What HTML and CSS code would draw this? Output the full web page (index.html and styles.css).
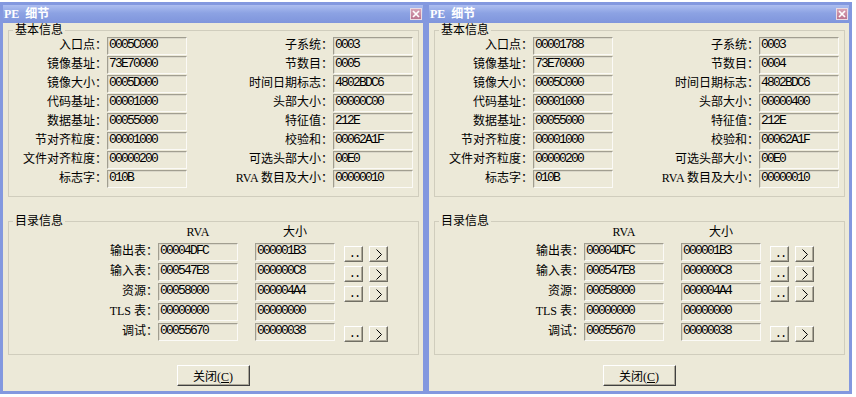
FILE: index.html
```html
<!DOCTYPE html>
<html lang="zh-CN">
<head>
    <meta charset="UTF-8">
    <title>PE 细节</title>
    <link rel="stylesheet" href="styles.css">
</head>
<body>

<!-- 第一个窗口 -->
<div class="window">
    <div class="titlebar">
        <span class="title">PE 细节</span>
        <button class="close-x"><svg width="8" height="8" viewBox="0 0 8 8"><path d="M1 1L7 7M7 1L1 7" stroke="#fff" stroke-width="1.7"/></svg></button>
    </div>
    <div class="client">
        <fieldset class="group">
            <legend>基本信息</legend>
            <div class="basic">
                <span class="lbl">入口点：</span><span class="field">0005C000</span>
                <span class="lbl">子系统：</span><span class="field">0003</span>
                <span class="lbl">镜像基址：</span><span class="field">73E70000</span>
                <span class="lbl">节数目：</span><span class="field">0005</span>
                <span class="lbl">镜像大小：</span><span class="field">0005D000</span>
                <span class="lbl">时间日期标志：</span><span class="field">4802BDC6</span>
                <span class="lbl">代码基址：</span><span class="field">00001000</span>
                <span class="lbl">头部大小：</span><span class="field">00000C00</span>
                <span class="lbl">数据基址：</span><span class="field">00055000</span>
                <span class="lbl">特征值：</span><span class="field">212E</span>
                <span class="lbl">节对齐粒度：</span><span class="field">00001000</span>
                <span class="lbl">校验和：</span><span class="field">00062A1F</span>
                <span class="lbl">文件对齐粒度：</span><span class="field">00000200</span>
                <span class="lbl">可选头部大小：</span><span class="field">00E0</span>
                <span class="lbl">标志字：</span><span class="field">010B</span>
                <span class="lbl">RVA 数目及大小：</span><span class="field">00000010</span>
            </div>
        </fieldset>

        <fieldset class="group dirs">
            <legend>目录信息</legend>
            <div class="dir-head"><span>RVA</span><span>大小</span></div>
            <div class="dir-row">
                <span class="lbl">输出表：</span><span class="field">00004DFC</span><span class="field size">000001B3</span>
                <button class="mini dots">..</button>
                <button class="mini"><svg width="8" height="11" viewBox="0 0 8 11"><path d="M1.5 0.5L6.5 5.5L1.5 10.5" fill="none" stroke="#000"/></svg></button>
            </div>
            <div class="dir-row">
                <span class="lbl">输入表：</span><span class="field">000547E8</span><span class="field size">000000C8</span>
                <button class="mini dots">..</button>
                <button class="mini"><svg width="8" height="11" viewBox="0 0 8 11"><path d="M1.5 0.5L6.5 5.5L1.5 10.5" fill="none" stroke="#000"/></svg></button>
            </div>
            <div class="dir-row">
                <span class="lbl">资源：</span><span class="field">00058000</span><span class="field size">000004A4</span>
                <button class="mini dots">..</button>
                <button class="mini"><svg width="8" height="11" viewBox="0 0 8 11"><path d="M1.5 0.5L6.5 5.5L1.5 10.5" fill="none" stroke="#000"/></svg></button>
            </div>
            <div class="dir-row">
                <span class="lbl">TLS 表：</span><span class="field">00000000</span><span class="field size">00000000</span>
            </div>
            <div class="dir-row">
                <span class="lbl">调试：</span><span class="field">00055670</span><span class="field size">00000038</span>
                <button class="mini dots">..</button>
                <button class="mini"><svg width="8" height="11" viewBox="0 0 8 11"><path d="M1.5 0.5L6.5 5.5L1.5 10.5" fill="none" stroke="#000"/></svg></button>
            </div>
        </fieldset>

        <button class="btn">关闭(<u>C</u>)</button>
    </div>
</div>

<!-- 第二个窗口 -->
<div class="window">
    <div class="titlebar">
        <span class="title">PE 细节</span>
        <button class="close-x"><svg width="8" height="8" viewBox="0 0 8 8"><path d="M1 1L7 7M7 1L1 7" stroke="#fff" stroke-width="1.7"/></svg></button>
    </div>
    <div class="client">
        <fieldset class="group">
            <legend>基本信息</legend>
            <div class="basic">
                <span class="lbl">入口点：</span><span class="field">00001788</span>
                <span class="lbl">子系统：</span><span class="field">0003</span>
                <span class="lbl">镜像基址：</span><span class="field">73E70000</span>
                <span class="lbl">节数目：</span><span class="field">0004</span>
                <span class="lbl">镜像大小：</span><span class="field">0005C000</span>
                <span class="lbl">时间日期标志：</span><span class="field">4802BDC6</span>
                <span class="lbl">代码基址：</span><span class="field">00001000</span>
                <span class="lbl">头部大小：</span><span class="field">00000400</span>
                <span class="lbl">数据基址：</span><span class="field">00055000</span>
                <span class="lbl">特征值：</span><span class="field">212E</span>
                <span class="lbl">节对齐粒度：</span><span class="field">00001000</span>
                <span class="lbl">校验和：</span><span class="field">00062A1F</span>
                <span class="lbl">文件对齐粒度：</span><span class="field">00000200</span>
                <span class="lbl">可选头部大小：</span><span class="field">00E0</span>
                <span class="lbl">标志字：</span><span class="field">010B</span>
                <span class="lbl">RVA 数目及大小：</span><span class="field">00000010</span>
            </div>
        </fieldset>

        <fieldset class="group dirs">
            <legend>目录信息</legend>
            <div class="dir-head"><span>RVA</span><span>大小</span></div>
            <div class="dir-row">
                <span class="lbl">输出表：</span><span class="field">00004DFC</span><span class="field size">000001B3</span>
                <button class="mini dots">..</button>
                <button class="mini"><svg width="8" height="11" viewBox="0 0 8 11"><path d="M1.5 0.5L6.5 5.5L1.5 10.5" fill="none" stroke="#000"/></svg></button>
            </div>
            <div class="dir-row">
                <span class="lbl">输入表：</span><span class="field">000547E8</span><span class="field size">000000C8</span>
                <button class="mini dots">..</button>
                <button class="mini"><svg width="8" height="11" viewBox="0 0 8 11"><path d="M1.5 0.5L6.5 5.5L1.5 10.5" fill="none" stroke="#000"/></svg></button>
            </div>
            <div class="dir-row">
                <span class="lbl">资源：</span><span class="field">00058000</span><span class="field size">000004A4</span>
                <button class="mini dots">..</button>
                <button class="mini"><svg width="8" height="11" viewBox="0 0 8 11"><path d="M1.5 0.5L6.5 5.5L1.5 10.5" fill="none" stroke="#000"/></svg></button>
            </div>
            <div class="dir-row">
                <span class="lbl">TLS 表：</span><span class="field">00000000</span><span class="field size">00000000</span>
            </div>
            <div class="dir-row">
                <span class="lbl">调试：</span><span class="field">00055670</span><span class="field size">00000038</span>
                <button class="mini dots">..</button>
                <button class="mini"><svg width="8" height="11" viewBox="0 0 8 11"><path d="M1.5 0.5L6.5 5.5L1.5 10.5" fill="none" stroke="#000"/></svg></button>
            </div>
        </fieldset>

        <button class="btn">关闭(<u>C</u>)</button>
    </div>
</div>

</body>
</html>
```

FILE: styles.css
```css
* {
    box-sizing: border-box;
}
body {
    margin: 0;
    padding-top: 2px;
    height: 397px;
    overflow: hidden;
    display: flex;
    background-color: #fff;
    font: 12px "Liberation Serif", "Noto Sans CJK SC", serif;
    color: #000;
}
.window {
    width: 426px;
    height: 392px;
    flex: none;
    display: flex;
    flex-direction: column;
    border: 3px solid #8398df;
    background-color: #ece9d8;
}
.titlebar {
    height: 18px;
    flex: none;
    display: flex;
    align-items: center;
    justify-content: space-between;
    padding-left: 1px;
    background: linear-gradient(#adbef0, #8ca2e3 45%, #7f95dc);
}
.title {
    color: #fff;
    font-weight: bold;
    line-height: 14px;
    word-spacing: 3px;
}
.close-x {
    width: 12px;
    height: 12px;
    margin-right: 1px;
    padding: 0;
    display: flex;
    align-items: center;
    justify-content: center;
    border: 1px solid #eadbe4;
    background: linear-gradient(#d7a3b4, #bc7590);
}
.client {
    flex: 1;
    display: flex;
    flex-direction: column;
}
.group {
    margin: 0 4px 0 5px;
    padding: 0 0 8px 0;
    min-width: 0;
    border: 1px solid #d0cdbd;
}
.group legend {
    margin-left: 4px;
    padding: 0 2px;
    line-height: 14px;
}
.basic {
    display: grid;
    grid-template-columns: 98px 80px 146px 80px;
    grid-auto-rows: 18px;
    row-gap: 1px;
}
.lbl {
    text-align: right;
    line-height: 16px;
    white-space: nowrap;
}
.field {
    display: block;
    width: 80px;
    height: 18px;
    padding-left: 1px;
    border: 1px solid;
    border-color: #a19e90 #fbfaf6 #fbfaf6 #a19e90;
    box-shadow: inset 1px 1px 0 #dad7c9;
    font: 13px "Liberation Mono", monospace;
    letter-spacing: -1.8px;
    line-height: 13px;
    color: #000;
    white-space: nowrap;
    overflow: hidden;
}
.dirs {
    margin-top: 17px;
    padding-bottom: 13px;
}
.dir-head {
    display: flex;
    gap: 17px;
    height: 17px;
    margin-top: -2px;
    padding-left: 149px;
    line-height: 12px;
}
.dir-head span {
    width: 80px;
    text-align: center;
}
.dir-row {
    display: flex;
    height: 18px;
    margin-bottom: 2px;
}
.dir-row:last-child {
    margin-bottom: 0;
}
.dir-row .lbl {
    width: 149px;
}
.dir-row .size {
    margin-left: 17px;
}
.mini {
    width: 19px;
    height: 16px;
    margin: 3px 0 0 6px;
    padding: 0;
    display: flex;
    align-items: center;
    justify-content: center;
    border: 1px solid;
    border-color: #fff #716f64 #716f64 #fff;
    box-shadow: inset -1px -1px 0 #aca899;
    background-color: #ece9d8;
}
.mini.dots {
    margin-left: 9px;
    align-items: flex-end;
    font: 12px "Liberation Mono", monospace;
    letter-spacing: -2px;
    line-height: 10px;
    padding: 0 0 2px 1px;
}
.btn {
    width: 73px;
    height: 21px;
    margin: 10px auto 0;
    padding: 0;
    border: 1px solid;
    border-color: #fff #404040 #404040 #fff;
    box-shadow: inset -1px -1px 0 #aca899;
    background-color: #ece9d8;
    font: 12px "Liberation Serif", "Noto Sans CJK SC", serif;
    color: #000;
}
```
